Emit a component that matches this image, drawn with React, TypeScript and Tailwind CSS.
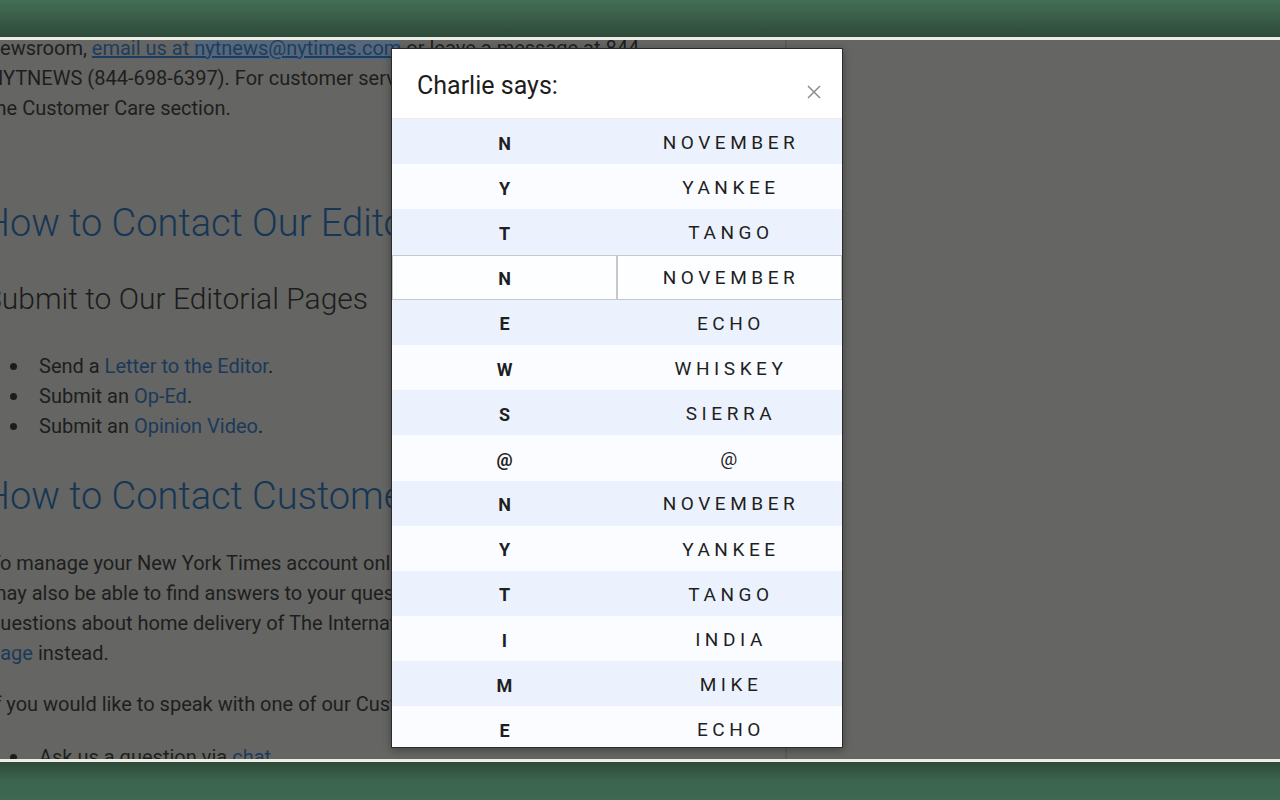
import React from "react";

const rows: [string, string][] = [
  ["N", "NOVEMBER"],
  ["Y", "YANKEE"],
  ["T", "TANGO"],
  ["N", "NOVEMBER"],
  ["E", "ECHO"],
  ["W", "WHISKEY"],
  ["S", "SIERRA"],
  ["@", "@"],
  ["N", "NOVEMBER"],
  ["Y", "YANKEE"],
  ["T", "TANGO"],
  ["I", "INDIA"],
  ["M", "MIKE"],
  ["E", "ECHO"],
  ["S", "SIERRA"],
  [".", "."],
  ["C", "CHARLIE"],
  ["O", "OSCAR"],
  ["M", "MIKE"],
];

const Bullet = ({ children }: { children: React.ReactNode }) => (
  <li className="flex items-center h-[30px]">
    <span className="ml-[21px] mr-[22px] h-[7px] w-[7px] rounded-full bg-[#1c1c1c]" />
    <span>{children}</span>
  </li>
);

const Article = () => (
  <div className="w-[787px] h-full overflow-hidden border-r-2 border-[#5b5b59]">
    <div className="ml-[-11px] mt-[-7px] text-[20px] leading-[30px] text-[#1e1e1e] whitespace-nowrap">
      <p>
        newsroom,{" "}
        <span className="underline text-[#1c3d5f]">
          email us at <span className="bg-[#56677a]">nytnews@nytimes.com</span>
        </span>{" "}
        or leave a message at 844-
        <br />
        NYTNEWS (844-698-6397). For customer service questions, please
        <br />
        the Customer Care section.
      </p>

      <h2 className="mt-[77px] ml-[-6px] text-[38px] leading-[46px] font-light text-[#163656]">
        How to Contact Our Editors
      </h2>

      <h3 className="mt-[35px] ml-[-5px] text-[30px] leading-[36px] font-light text-[#1c1c1c]">
        Submit to Our Editorial Pages
      </h3>

      <ul className="mt-[34px]">
        <Bullet>
          Send a <span className="text-[#1b3a5a]">Letter to the Editor</span>.
        </Bullet>
        <Bullet>
          Submit an <span className="text-[#1b3a5a]">Op-Ed</span>.
        </Bullet>
        <Bullet>
          Submit an <span className="text-[#1b3a5a]">Opinion Video</span>.
        </Bullet>
      </ul>

      <h2 className="mt-[32px] ml-[-6px] text-[38px] leading-[46px] font-light text-[#163656]">
        How to Contact Customer Care
      </h2>

      <p className="mt-[29px]">
        To manage your New York Times account online, please visit
        <br />
        may also be able to find answers to your questions in our
        <br />
        questions about home delivery of The International Edition,
        <br />
        <span className="text-[#1b3a5a]">page</span> instead.
      </p>

      <p className="mt-[21px]">
        If you would like to speak with one of our Customer Care
      </p>

      <ul className="mt-[23px]">
        <Bullet>
          Ask us a question via <span className="text-[#1b3a5a]">chat</span>.
        </Bullet>
      </ul>
    </div>
  </div>
);

const Modal = () => (
  <div className="absolute top-[8px] left-[391px] w-[452px] h-[700px] border border-[#2b2b2b] bg-white overflow-hidden shadow-[0_2px_8px_rgba(0,0,0,0.35)]">
    <div className="h-[70px] border-b border-[#ececec] flex justify-between pl-[25px] pr-[21px]">
      <div className="pt-[22px] text-[25px] leading-[30px] text-[#1d1d1d]">Charlie says:</div>
      <svg className="mt-[36px]" width="14" height="14" viewBox="0 0 14 14" fill="none">
        <path d="M1 1L13 13M13 1L1 13" stroke="#8c8c8c" strokeWidth="1.5" />
      </svg>
    </div>
    <div>
      {rows.map(([letter, word], i) => {
        const active = i === 3;
        const bg = active ? "bg-[#fdfeff]" : i % 2 === 0 ? "bg-[#ecf2fd]" : "bg-[#fafcff]";
        const cell = active
          ? "w-1/2 flex items-center justify-center pt-[3px] border border-[#c8c8c8]"
          : "w-1/2 flex items-center justify-center pt-[3px]";
        return (
          <div key={i} className={`flex h-[45.2px] ${bg} text-[#1f1f1f]`}>
            <div className={`${cell} text-[18px] font-bold`}>{letter}</div>
            <div className={`${cell} text-[19px] tracking-[0.24em] pl-[3px]`}>{word}</div>
          </div>
        );
      })}
    </div>
  </div>
);

export default function App() {
  return (
    <div className="w-[1280px] h-[800px] flex flex-col overflow-hidden font-['Roboto',sans-serif]">
      <div className="h-[37px] bg-gradient-to-b from-[#436f56] to-[#2e4a3a]" />
      <div className="h-[3px] bg-[#eeede5]" />
      <div className="relative flex-1 bg-[#656563] overflow-hidden">
        <Article />
        <Modal />
      </div>
      <div className="h-[3px] bg-[#eeede5]" />
      <div className="h-[38px] bg-gradient-to-b from-[#2d4938] via-[#3c6550] to-[#3e6852]" />
    </div>
  );
}
